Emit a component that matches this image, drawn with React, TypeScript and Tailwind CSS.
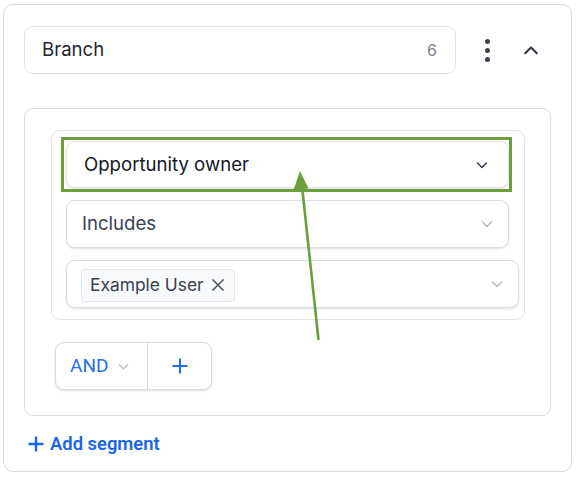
import React from 'react';

const Chevron = ({ className = '', up = false }: { className?: string; up?: boolean }) => (
  <svg width="14" height="14" viewBox="0 0 14 14" fill="none" className={className}>
    <path
      d={up ? 'M2.5 9.5L7 5l4.5 4.5' : 'M2.5 5L7 9.5 11.5 5'}
      stroke="currentColor"
      strokeWidth="1.6"
      strokeLinecap="round"
      strokeLinejoin="round"
    />
  </svg>
);

const Plus = ({ size = 18, width = 2.2 }: { size?: number; width?: number }) => (
  <svg width={size} height={size} viewBox="0 0 18 18" fill="none">
    <path d="M9 1.5v15M1.5 9h15" stroke="currentColor" strokeWidth={width} />
  </svg>
);

export default function App() {
  const inter = { fontFamily: 'Inter, "Noto Sans", sans-serif' };
  const roboto = { fontFamily: 'Roboto, "Noto Sans", sans-serif' };

  return (
    <div className="relative w-[577px] h-[477px] bg-white overflow-hidden pt-[4px] pl-[3px]" style={inter}>
      <div className="w-[569px] h-[468px] border border-[#d5d9e0] rounded-[10px] px-[20px] pt-[21px]">
        {/* header */}
        <div className="flex items-center">
          <div className="w-[432px] h-[48px] border border-[#dfe2e8] rounded-[9px] flex items-center justify-between pl-[17px] pr-[18px]">
            <span className="text-[18.6px] text-[#1f2430]">Branch</span>
            <span className="text-[16px] text-[#7b8190]">6</span>
          </div>
          <div className="ml-[29px] flex flex-col gap-[4px] items-center">
            <span className="w-[5px] h-[5px] rounded-full bg-[#3b4250]" />
            <span className="w-[5px] h-[5px] rounded-full bg-[#3b4250]" />
            <span className="w-[5px] h-[5px] rounded-full bg-[#3b4250]" />
          </div>
          <Chevron up className="ml-[32px] text-[#2f3644] w-[18px] h-[18px]" />
        </div>

        {/* segment */}
        <div className="mt-[34px] w-[527px] h-[308px] border border-[#d8dce3] rounded-[9px] pt-[21px] pl-[26px]">
          <div className="w-[474px] h-[190px] border border-[#e1e4ea] rounded-[9px] pt-[10px] pl-[14px] flex flex-col gap-[12px]">
            <div className="w-[443px] h-[47px] border border-[#e2e5ea] rounded-[9px] shadow-sm flex items-center justify-between pl-[17px] pr-[19px]">
              <span className="text-[18.6px] text-[#121826]">Opportunity owner</span>
              <Chevron className="text-[#3b4254]" />
            </div>
            <div className="w-[443px] h-[48px] border border-[#d8dce4] rounded-[9px] shadow-sm flex items-center justify-between pl-[15px] pr-[14px]">
              <span className="text-[18.6px] text-[#374151]">Includes</span>
              <Chevron className="text-[#b5b9c2]" />
            </div>
            <div className="w-[453px] h-[48px] border border-[#d8dce4] rounded-[9px] shadow-sm flex items-center justify-between pl-[14px] pr-[14px]">
              <span className="h-[33px] mt-[2px] border border-[#e1e4ea] bg-[#f8f9fb] rounded-[3px] flex items-center pl-[8px] pr-[9px] gap-[7px] text-[17.4px] text-[#3a4150]">
                Example User
                <svg width="14" height="14" viewBox="0 0 14 14" fill="none">
                  <path d="M1.5 1.5l11 11M12.5 1.5l-11 11" stroke="#4b5260" strokeWidth="1.5" />
                </svg>
              </span>
              <Chevron className="text-[#b5b9c2]" />
            </div>
          </div>

          <div className="mt-[22px] ml-[4px] w-[157px] h-[48px] border border-[#d5d9e1] rounded-[9px] shadow-sm flex">
            <div className="w-[92px] h-full border-r border-[#d5d9e1] flex items-center pl-[14px] gap-[9px] text-[#1f6ef0] text-[19px]" style={roboto}>
              AND
              <Chevron className="text-[#c0c4cc] w-[13px] h-[13px]" />
            </div>
            <div className="flex-1 flex items-center justify-center text-[#1f6ef0]">
              <Plus size={18} width={2} />
            </div>
          </div>
        </div>

        <div className="mt-[14px] ml-[3px] flex items-center gap-[5px] text-[#1766ea] text-[18.4px] font-semibold" style={roboto}>
          <Plus size={18} width={2.4} />
          <span>Add segment</span>
        </div>
      </div>

      {/* annotation */}
      <div className="absolute left-[61px] top-[137px] w-[451px] h-[55px] border-[3px] border-[#6a9f3b] pointer-events-none" />
      <svg className="absolute left-0 top-0 pointer-events-none" width="577" height="477">
        <line x1="318.5" y1="340" x2="302" y2="186" stroke="#6a9f3b" strokeWidth="2.6" />
        <polygon points="300,171 293.5,190 308.5,188.5" fill="#6a9f3b" />
      </svg>
    </div>
  );
}
